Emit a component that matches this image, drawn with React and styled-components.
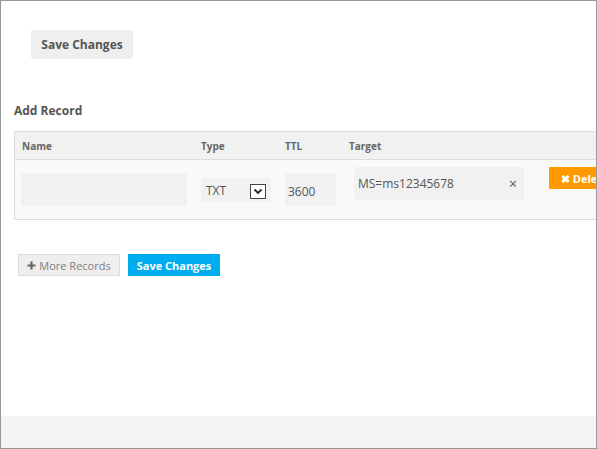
import React from 'react';
import styled, { createGlobalStyle } from 'styled-components';

const GlobalStyle = createGlobalStyle`
  html, body {
    margin: 0;
    padding: 0;
    background: #fff;
  }
  body {
    font-family: "Open Sans", "Liberation Sans", sans-serif;
  }
  * {
    box-sizing: border-box;
  }
`;

const Frame = styled.div`
  width: 597px;
  height: 449px;
  border: 1px solid #999;
  display: flex;
  flex-direction: column;
  overflow: hidden;
  background: #fff;
`;

const Content = styled.div`
  flex: 1;
  padding-left: 13px;
  display: flex;
  flex-direction: column;
  align-items: flex-start;
`;

const Footer = styled.div`
  height: 32px;
  background: #f4f4f4;
`;

const GreyButton = styled.button`
  margin: 29px 0 0 17px;
  height: 29px;
  width: 102px;
  border: none;
  border-radius: 2px;
  background: #efefef;
  color: #555;
  font-family: inherit;
  font-weight: 700;
  font-size: 12px;
  padding: 0;
`;

const Heading = styled.h3`
  margin: 44px 0 0 0;
  font-size: 12px;
  line-height: 16px;
  font-weight: 700;
  color: #555;
`;

const Table = styled.div`
  margin-top: 12px;
  width: 620px;
  border: 1px solid #ddd;
  flex-shrink: 0;
`;

const Grid = styled.div`
  display: grid;
  grid-template-columns: 166px 70px 51px 174px auto;
  column-gap: 14px;
  padding-left: 6px;
`;

const HeadRow = styled(Grid)`
  height: 28px;
  align-items: center;
  background: #f1f1f1;
  border-bottom: 1px solid #ddd;
  & > :first-child { margin-left: 1px; }
  & > :nth-child(4) { margin-left: -1px; }
`;

const HeadCell = styled.div`
  font-size: 10px;
  font-weight: 700;
  color: #666;
`;

const BodyRow = styled(Grid)`
  height: 59px;
  align-items: start;
  padding-top: 7px;
  background: #f9f9f9;
`;

const Field = styled.div`
  margin-top: ${p => p.$top || 0}px;
  margin-left: ${p => p.$left || 0}px;
  height: ${p => p.$h || 33}px;
  background: #f1f1f1;
  display: flex;
  align-items: center;
  padding: 0 ${p => p.$pad || 4}px;
  font-size: 12px;
  color: #555;
`;

const FieldText = styled.span`
  flex: 1;
  padding-top: ${p => p.$dy || 0}px;
`;

const ArrowBox = styled.span`
  width: 16px;
  height: 15px;
  border: 1px solid #444;
  background: #fff;
  display: flex;
  align-items: center;
  justify-content: center;
  margin-top: 3px;
`;

const Clear = styled.span`
  font-size: 14px;
  color: #555;
  margin-right: 3px;
`;

const DeleteButton = styled.button`
  margin-left: 11px;
  height: 22px;
  width: 80px;
  border: none;
  background: #ff9900;
  color: #fff;
  font-family: inherit;
  font-weight: 700;
  font-size: 11px;
  text-align: left;
  padding: 0 0 0 12px;
  white-space: nowrap;
`;

const Actions = styled.div`
  margin: 34px 0 0 4px;
  display: flex;
  gap: 8px;
`;

const MoreButton = styled.button`
  height: 22px;
  width: 102px;
  border: 1px solid #ddd;
  background: #eee;
  color: #808080;
  font-family: inherit;
  font-size: 11px;
  display: flex;
  align-items: center;
  justify-content: center;
  gap: 3px;
  padding: 0;
`;

const BlueButton = styled.button`
  height: 22px;
  width: 92px;
  border: none;
  background: #00aeef;
  color: #fff;
  font-family: inherit;
  font-weight: 700;
  font-size: 11px;
  padding: 0;
`;

const PlusIcon = () => (
  <svg width="9" height="9" viewBox="0 0 9 9">
    <path d="M4.5 0.5v8M0.5 4.5h8" stroke="#666" strokeWidth="2.2" />
  </svg>
);

const Chevron = () => (
  <svg width="10" height="7" viewBox="0 0 10 7">
    <path d="M1.5 1.5l3.5 3.5 3.5-3.5" fill="none" stroke="#222" strokeWidth="1.8" />
  </svg>
);

function App() {
  return (
    <>
      <GlobalStyle />
      <Frame>
        <Content>
          <GreyButton>Save Changes</GreyButton>
          <Heading>Add Record</Heading>
          <Table>
            <HeadRow>
              <HeadCell>Name</HeadCell>
              <HeadCell>Type</HeadCell>
              <HeadCell>TTL</HeadCell>
              <HeadCell>Target</HeadCell>
              <HeadCell />
            </HeadRow>
            <BodyRow>
              <Field $top={6} />
              <Field $top={11} $h={24} $pad={5}>
                <FieldText $dy={1}>TXT</FieldText>
                <ArrowBox>
                  <Chevron />
                </ArrowBox>
              </Field>
              <Field $top={6} $pad={3}>
                <FieldText $dy={3}>3600</FieldText>
              </Field>
              <Field $left={4} $pad={4}>
                <FieldText>MS=ms12345678</FieldText>
                <Clear>×</Clear>
              </Field>
              <DeleteButton>✖ Delete</DeleteButton>
            </BodyRow>
          </Table>
          <Actions>
            <MoreButton>
              <PlusIcon />
              More Records
            </MoreButton>
            <BlueButton>Save Changes</BlueButton>
          </Actions>
        </Content>
        <Footer />
      </Frame>
    </>
  );
}

export default App;
